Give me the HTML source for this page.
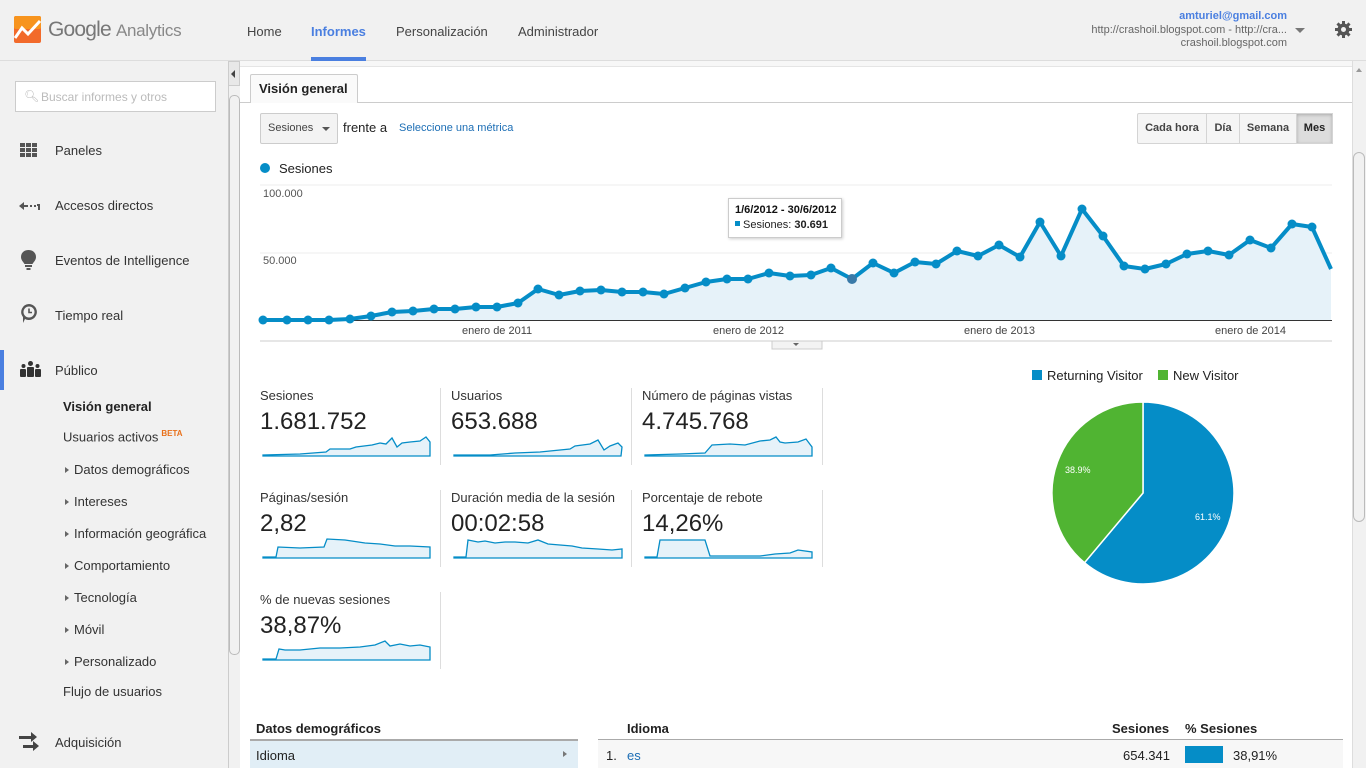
<!DOCTYPE html>
<html><head><meta charset="utf-8"><style>
*{margin:0;padding:0;box-sizing:border-box}
body{width:1366px;height:768px;overflow:hidden;background:#fff;font-family:"Liberation Sans",Arial,sans-serif;position:relative;color:#222}
.a{position:absolute;white-space:nowrap}
#hdr{position:absolute;left:0;top:0;width:1366px;height:61px;background:#f1f1f1;border-bottom:1px solid #ddd}
#side{position:absolute;left:0;top:61px;width:228px;height:707px;background:#f1f1f1}
.nav{font-size:13px;color:#444}
.sm{font-size:13px;color:#333}
.tri{display:inline-block;width:0;height:0;border-left:4px solid #666;border-top:3.5px solid transparent;border-bottom:3.5px solid transparent;margin-right:5px;vertical-align:1px}
.mt{font-size:13px;color:#333}
.mv{font-size:24px;color:#222}
.btn{position:absolute;top:113px;height:31px;border:1px solid #d4d4d4;background:#f5f5f5;font-size:11px;font-weight:bold;color:#444;text-align:center;line-height:29px}
</style></head><body>
<div id="hdr"></div>
<svg class="a" style="left:14px;top:16px" width="27" height="27" viewBox="0 0 27 27"><rect width="27" height="27" rx="2" fill="#f26a2b"/><rect width="27" height="13" rx="2" fill="#f7941e"/><polyline points="1,22 8,12 14,18 26,5" fill="none" stroke="#fff" stroke-width="3"/></svg>
<div class="a" style="left:48px;top:18px;font-size:21px;color:#777;letter-spacing:-0.8px">Google <span style="font-size:17px;color:#888;letter-spacing:-0.3px">Analytics</span></div>
<div class="a nav" style="left:247px;top:24px">Home</div>
<div class="a" style="left:311px;top:24px;font-size:13px;font-weight:bold;color:#4a7fe0">Informes</div>
<div class="a" style="left:311px;top:57px;width:55px;height:4px;background:#4a7fe0"></div>
<div class="a nav" style="left:396px;top:24px">Personalización</div>
<div class="a nav" style="left:518px;top:24px">Administrador</div>
<div class="a" style="right:79px;top:10px;font-size:11px;font-weight:bold;color:#4a7fe0">amturiel@gmail.com</div>
<div class="a" style="right:79px;top:24px;font-size:11px;color:#666">http://crashoil.blogspot.com - http://cra...</div>
<div class="a" style="right:79px;top:37px;font-size:11px;color:#666">crashoil.blogspot.com</div>
<div class="a" style="left:1295px;top:28px;border-left:5px solid transparent;border-right:5px solid transparent;border-top:5px solid #777"></div>
<svg class="a" style="left:1335px;top:21px" width="17" height="17" viewBox="0 0 17 17"><g fill="#555"><circle cx="8.5" cy="8.5" r="6"/><rect x="7" y="0" width="3" height="17"/><rect x="0" y="7" width="17" height="3"/><rect x="7" y="0" width="3" height="17" transform="rotate(45 8.5 8.5)"/><rect x="7" y="0" width="3" height="17" transform="rotate(-45 8.5 8.5)"/></g><circle cx="8.5" cy="8.5" r="2.5" fill="#f1f1f1"/></svg>

<div id="side"></div>
<div class="a" style="left:15px;top:81px;width:201px;height:31px;border:1px solid #ccc;background:#fff"></div>
<div class="a" style="left:24px;top:89px;font-size:12px;color:#bbb">🔍︎</div>
<div class="a" style="left:41px;top:90px;font-size:12px;color:#bbb">Buscar informes y otros</div>
<svg class="a" style="left:20px;top:143px" width="17" height="15"><g fill="#555"><rect x="0" y="0" width="5" height="4"/><rect x="6" y="0" width="5" height="4"/><rect x="12" y="0" width="5" height="4"/><rect x="0" y="5" width="5" height="4"/><rect x="6" y="5" width="5" height="4"/><rect x="12" y="5" width="5" height="4"/><rect x="0" y="10" width="5" height="4"/><rect x="6" y="10" width="5" height="4"/><rect x="12" y="10" width="5" height="4"/></g></svg>
<div class="a sm" style="left:55px;top:143px">Paneles</div>
<svg class="a" style="left:19px;top:201px" width="22" height="10"><path d="M0 5 L5 1 V4 H9 V6 H5 V9Z M11 4h2v2h-2z M15 4h2v2h-2z M18 3h3v6h-2V5h-1z" fill="#555"/></svg>
<div class="a sm" style="left:55px;top:198px">Accesos directos</div>
<svg class="a" style="left:21px;top:250px" width="15" height="22"><path d="M7.5 0C3 0 0 3 0 7c0 3 2 4.5 3.5 7h8C13 11.5 15 10 15 7 15 3 12 0 7.5 0z" fill="#555"/><rect x="4" y="15" width="7" height="2" fill="#555"/><rect x="5.5" y="18" width="4" height="2" fill="#555"/></svg>
<div class="a sm" style="left:55px;top:253px">Eventos de Intelligence</div>
<svg class="a" style="left:20px;top:304px" width="18" height="20"><path d="M9 0a8 8 0 1 1-4 15l-2 4v-6A8 8 0 0 1 9 0z" fill="#555"/><circle cx="9" cy="8" r="5.5" fill="#f1f1f1"/><path d="M9 4.5V8.5H12" stroke="#555" stroke-width="1.6" fill="none"/></svg>
<div class="a sm" style="left:55px;top:308px">Tiempo real</div>
<div class="a" style="left:0;top:350px;width:4px;height:40px;background:#4a7fe0"></div>
<svg class="a" style="left:20px;top:361px" width="21" height="16"><g fill="#333"><circle cx="10.5" cy="2.5" r="2.5"/><circle cx="3.5" cy="5" r="2"/><circle cx="17.5" cy="5" r="2"/><rect x="7" y="6" width="7" height="10" rx="1"/><rect x="0" y="8" width="6" height="8" rx="1"/><rect x="15" y="8" width="6" height="8" rx="1"/></g></svg>
<div class="a sm" style="left:55px;top:363px">Público</div>
<div class="a" style="left:63px;top:399px;font-size:13px;font-weight:bold;color:#222">Visión general</div>
<div class="a sm" style="left:63px;top:429px">Usuarios activos<sup style="font-size:8px;color:#e8701a;font-weight:bold;margin-left:3px">BETA</sup></div>
<div class="a sm" style="left:65px;top:462px"><span class="tri"></span>Datos demográficos</div>
<div class="a sm" style="left:65px;top:494px"><span class="tri"></span>Intereses</div>
<div class="a sm" style="left:65px;top:526px"><span class="tri"></span>Información geográfica</div>
<div class="a sm" style="left:65px;top:558px"><span class="tri"></span>Comportamiento</div>
<div class="a sm" style="left:65px;top:590px"><span class="tri"></span>Tecnología</div>
<div class="a sm" style="left:65px;top:622px"><span class="tri"></span>Móvil</div>
<div class="a sm" style="left:65px;top:654px"><span class="tri"></span>Personalizado</div>
<div class="a sm" style="left:63px;top:684px">Flujo de usuarios</div>
<svg class="a" style="left:19px;top:731px" width="22" height="22"><path d="M0 5h12V1l6 5-6 5V8H0z M4 14h10v-4l6 5-6 5v-3H4z" fill="#444"/></svg>
<div class="a sm" style="left:55px;top:735px">Adquisición</div>
<div class="a" style="left:228px;top:61px;width:12px;height:707px;background:#f1f1f1;border-left:1px solid #ccc"></div>
<div class="a" style="left:229px;top:95px;width:11px;height:560px;border:1px solid #bbb;border-radius:5px;background:#f1f1f1"></div>
<div class="a" style="left:228px;top:61px;width:12px;height:25px;background:#e8e8e8;border:1px solid #ccc"></div>
<div class="a" style="left:231px;top:70px;border-right:4px solid #444;border-top:4px solid transparent;border-bottom:4px solid transparent"></div>
<div class="a" style="left:1352px;top:61px;width:14px;height:707px;background:#f1f1f1;border-left:1px solid #ddd"></div>
<div class="a" style="left:1353px;top:152px;width:12px;height:370px;border:1px solid #bbb;border-radius:6px;background:#f1f1f1"></div>
<div class="a" style="left:1356px;top:68px;border-left:3px solid transparent;border-right:3px solid transparent;border-bottom:4px solid #999"></div>

<div class="a" style="left:240px;top:61px;width:1112px;height:6px;background:#f7f7f7;border-bottom:1px solid #e5e5e5"></div>
<div class="a" style="left:240px;top:102px;width:1112px;height:1px;background:#ccc"></div>
<div class="a" style="left:250px;top:74px;width:108px;height:29px;border:1px solid #ccc;border-bottom:none;background:#fafafa;border-radius:2px 2px 0 0"></div>
<div class="a" style="left:259px;top:81px;font-size:13px;font-weight:bold;color:#222">Visión general</div>
<div class="a" style="left:260px;top:113px;width:78px;height:31px;border:1px solid #ccc;background:#f3f3f3;border-radius:2px"></div>
<div class="a" style="left:268px;top:122px;font-size:11px;color:#444">Sesiones</div>
<div class="a" style="left:322px;top:127px;border-left:4px solid transparent;border-right:4px solid transparent;border-top:4px solid #555"></div>
<div class="a" style="left:343px;top:120px;font-size:13px;color:#222">frente a</div>
<div class="a" style="left:399px;top:122px;font-size:11px;color:#1c6eb5">Seleccione una métrica</div>
<div class="btn" style="left:1137px;width:70px;border-radius:2px 0 0 2px">Cada hora</div>
<div class="btn" style="left:1206px;width:34px">Día</div>
<div class="btn" style="left:1239px;width:58px">Semana</div>
<div class="btn" style="left:1296px;width:37px;background:#ddd;color:#222;box-shadow:inset 0 1px 3px #aaa">Mes</div>
<div class="a" style="left:260px;top:163px;width:10px;height:10px;border-radius:50%;background:#058dc7"></div>
<div class="a" style="left:279px;top:161px;font-size:13px;color:#222">Sesiones</div>

<svg class="a" style="left:0;top:0" width="1366" height="768">
<line x1="260" y1="185" x2="1332" y2="185" stroke="#eee"/>
<line x1="260" y1="253" x2="1332" y2="253" stroke="#eee"/>
<line x1="260" y1="341" x2="1332" y2="341" stroke="#ccc"/>
<polygon fill="#e6f2f9" points="261,320 261,320 287,320 308,320 329,320 350,319 371,316 392,312 413,311 434,309 455,309 476,307 497,307 518,303 538,289 559,295 580,291 601,290 622,292 643,292 664,294 685,288 706,282 727,279 748,279 769,273 790,276 811,275 831,268 852,279 873,263 894,273 915,262 936,264 957,251 978,256 999,245 1020,257 1040,222 1061,256 1082,209 1103,236 1124,266 1145,269 1166,264 1187,254 1208,251 1229,255 1250,240 1271,248 1292,224 1312,227 1331,269 1331,320"/>
<line x1="260" y1="320.5" x2="1332" y2="320.5" stroke="#333"/>
<polyline fill="none" stroke="#058dc7" stroke-width="4" stroke-linejoin="round" points="261,320 287,320 308,320 329,320 350,319 371,316 392,312 413,311 434,309 455,309 476,307 497,307 518,303 538,289 559,295 580,291 601,290 622,292 643,292 664,294 685,288 706,282 727,279 748,279 769,273 790,276 811,275 831,268 852,279 873,263 894,273 915,262 936,264 957,251 978,256 999,245 1020,257 1040,222 1061,256 1082,209 1103,236 1124,266 1145,269 1166,264 1187,254 1208,251 1229,255 1250,240 1271,248 1292,224 1312,227 1331,269"/>
<g fill="#058dc7">
<circle cx="263" cy="320" r="4.5"/><circle cx="287" cy="320" r="4.5"/><circle cx="308" cy="320" r="4.5"/><circle cx="329" cy="320" r="4.5"/><circle cx="350" cy="319" r="4.5"/><circle cx="371" cy="316" r="4.5"/><circle cx="392" cy="312" r="4.5"/><circle cx="413" cy="311" r="4.5"/><circle cx="434" cy="309" r="4.5"/><circle cx="455" cy="309" r="4.5"/><circle cx="476" cy="307" r="4.5"/><circle cx="497" cy="307" r="4.5"/><circle cx="518" cy="303" r="4.5"/><circle cx="538" cy="289" r="4.5"/><circle cx="559" cy="295" r="4.5"/><circle cx="580" cy="291" r="4.5"/><circle cx="601" cy="290" r="4.5"/><circle cx="622" cy="292" r="4.5"/><circle cx="643" cy="292" r="4.5"/><circle cx="664" cy="294" r="4.5"/><circle cx="685" cy="288" r="4.5"/><circle cx="706" cy="282" r="4.5"/><circle cx="727" cy="279" r="4.5"/><circle cx="748" cy="279" r="4.5"/><circle cx="769" cy="273" r="4.5"/><circle cx="790" cy="276" r="4.5"/><circle cx="811" cy="275" r="4.5"/><circle cx="831" cy="268" r="4.5"/><circle cx="852" cy="279" r="5" fill="#3a7aa8"/><circle cx="873" cy="263" r="4.5"/><circle cx="894" cy="273" r="4.5"/><circle cx="915" cy="262" r="4.5"/><circle cx="936" cy="264" r="4.5"/><circle cx="957" cy="251" r="4.5"/><circle cx="978" cy="256" r="4.5"/><circle cx="999" cy="245" r="4.5"/><circle cx="1020" cy="257" r="4.5"/><circle cx="1040" cy="222" r="4.5"/><circle cx="1061" cy="256" r="4.5"/><circle cx="1082" cy="209" r="4.5"/><circle cx="1103" cy="236" r="4.5"/><circle cx="1124" cy="266" r="4.5"/><circle cx="1145" cy="269" r="4.5"/><circle cx="1166" cy="264" r="4.5"/><circle cx="1187" cy="254" r="4.5"/><circle cx="1208" cy="251" r="4.5"/><circle cx="1229" cy="255" r="4.5"/><circle cx="1250" cy="240" r="4.5"/><circle cx="1271" cy="248" r="4.5"/><circle cx="1292" cy="224" r="4.5"/><circle cx="1312" cy="227" r="4.5"/>
</g>
<rect x="772" y="341" width="50" height="8" fill="#f3f3f3" stroke="#ccc"/>
<path d="M793 343h6l-3 3z" fill="#666"/>
<g stroke="#ddd"><line x1="440.5" y1="388" x2="440.5" y2="465"/><line x1="631.5" y1="388" x2="631.5" y2="465"/><line x1="822.5" y1="388" x2="822.5" y2="465"/><line x1="440.5" y1="490" x2="440.5" y2="567"/><line x1="631.5" y1="490" x2="631.5" y2="567"/><line x1="822.5" y1="490" x2="822.5" y2="567"/><line x1="440.5" y1="592" x2="440.5" y2="669"/></g>
<g fill="#e6f2f9" stroke="#058dc7" stroke-width="1.3">
<path d="M263 455 L300 454 L326 452 L330 449 L350 449 L356 447 L372 445 L380 443 L386 444 L392 438 L397 447 L402 443 L410 442 L420 441 L426 437 L430 442 L430 456 L263 456Z"/>
<path d="M454 455 L490 455 L515 453 L540 452 L560 450 L570 449 L575 446 L590 444 L598 440 L604 450 L610 446 L618 443 L622 447 L621 456 L454 456Z"/>
<path d="M645 455 L680 454 L705 453 L712 445 L730 444 L745 445 L760 441 L770 440 L776 437 L780 442 L785 443 L798 442 L806 439 L812 447 L812 456 L645 456Z"/>
<path d="M263 557 L276 557 L278 547 L300 548 L324 547 L327 539 L345 540 L365 543 L380 544 L395 546 L410 546 L430 547 L430 558 L263 558Z"/>
<path d="M454 557 L466 557 L468 540 L478 542 L485 541 L495 543 L505 542 L515 542 L528 543 L538 540 L548 544 L560 545 L572 546 L582 548 L598 549 L612 550 L622 549 L622 558 L454 558Z"/>
<path d="M645 557 L657 557 L660 540 L680 540 L700 540 L705 540 L710 556 L730 556 L760 556 L775 554 L790 553 L798 550 L812 552 L812 558 L645 558Z"/>
<path d="M263 659 L276 659 L279 649 L285 650 L300 650 L320 648 L340 648 L360 647 L375 645 L385 641 L390 646 L400 644 L410 646 L420 645 L430 647 L430 660 L263 660Z"/>
</g>
<path d="M1143 493 L1143 402 A91 91 0 1 1 1084.5 562.7 Z" fill="#058dc7" stroke="#fff" stroke-width="1.5"/>
<path d="M1143 493 L1084.5 562.7 A91 91 0 0 1 1143 402 Z" fill="#50b432" stroke="#fff" stroke-width="1.5"/>
<text x="1195" y="520" font-size="9" fill="#fff" font-family="Liberation Sans">61.1%</text>
<text x="1065" y="473" font-size="9" fill="#fff" font-family="Liberation Sans">38.9%</text>
<rect x="1032" y="370" width="10" height="10" fill="#058dc7"/>
<rect x="1158" y="370" width="10" height="10" fill="#50b432"/>
</svg>
<div class="a" style="left:1047px;top:368px;font-size:13px;color:#222">Returning Visitor</div>
<div class="a" style="left:1173px;top:368px;font-size:13px;color:#222">New Visitor</div>

<div class="a" style="left:728px;top:198px;width:114px;height:40px;background:#fff;border:1px solid #ccc;box-shadow:1px 1px 3px rgba(0,0,0,.2)"></div>
<div class="a" style="left:735px;top:204px;font-size:11px;font-weight:bold;color:#111">1/6/2012 - 30/6/2012</div>
<div class="a" style="left:735px;top:219px;font-size:11px;color:#222"><span style="display:inline-block;width:5px;height:5px;background:#058dc7;vertical-align:2px;margin-right:3px"></span>Sesiones: <b>30.691</b></div>
<div class="a" style="left:263px;top:188px;font-size:11px;color:#555">100.000</div>
<div class="a" style="left:263px;top:255px;font-size:11px;color:#555">50.000</div>
<div class="a" style="left:462px;top:325px;font-size:11px;color:#444">enero de 2011</div>
<div class="a" style="left:713px;top:325px;font-size:11px;color:#444">enero de 2012</div>
<div class="a" style="left:964px;top:325px;font-size:11px;color:#444">enero de 2013</div>
<div class="a" style="left:1215px;top:325px;font-size:11px;color:#444">enero de 2014</div>

<div class="a mt" style="left:260px;top:388px">Sesiones</div><div class="a mv" style="left:260px;top:408px">1.681.752</div>
<div class="a mt" style="left:451px;top:388px">Usuarios</div><div class="a mv" style="left:451px;top:408px">653.688</div>
<div class="a mt" style="left:642px;top:388px">Número de páginas vistas</div><div class="a mv" style="left:642px;top:408px">4.745.768</div>
<div class="a mt" style="left:260px;top:490px">Páginas/sesión</div><div class="a mv" style="left:260px;top:510px">2,82</div>
<div class="a mt" style="left:451px;top:490px">Duración media de la sesión</div><div class="a mv" style="left:451px;top:510px">00:02:58</div>
<div class="a mt" style="left:642px;top:490px">Porcentaje de rebote</div><div class="a mv" style="left:642px;top:510px">14,26%</div>
<div class="a mt" style="left:260px;top:592px">% de nuevas sesiones</div><div class="a mv" style="left:260px;top:612px">38,87%</div>

<div class="a" style="left:256px;top:721px;font-size:13px;font-weight:bold;color:#222">Datos demográficos</div>
<div class="a" style="left:250px;top:739px;width:328px;height:29px;background:#e1eef6;border-top:2px solid #aaa"></div>
<div class="a" style="left:256px;top:748px;font-size:13px;color:#222">Idioma</div>
<div class="a" style="left:563px;top:751px;border-left:4px solid #777;border-top:3.5px solid transparent;border-bottom:3.5px solid transparent"></div>
<div class="a" style="left:627px;top:721px;font-size:13px;font-weight:bold;color:#222">Idioma</div>
<div class="a" style="left:1112px;top:721px;font-size:13px;font-weight:bold;color:#222">Sesiones</div>
<div class="a" style="left:1185px;top:721px;font-size:13px;font-weight:bold;color:#222">% Sesiones</div>
<div class="a" style="left:598px;top:739px;width:745px;height:29px;background:#f7f7f7;border-top:1px solid #aaa"></div>
<div class="a" style="left:606px;top:748px;font-size:13px;color:#222">1.</div>
<div class="a" style="left:627px;top:748px;font-size:13px;color:#1c6eb5">es</div>
<div class="a" style="left:1123px;top:748px;font-size:13px;color:#222">654.341</div>
<div class="a" style="left:1185px;top:746px;width:38px;height:17px;background:#058dc7"></div>
<div class="a" style="left:1233px;top:748px;font-size:13px;color:#222">38,91%</div>
</body></html>
